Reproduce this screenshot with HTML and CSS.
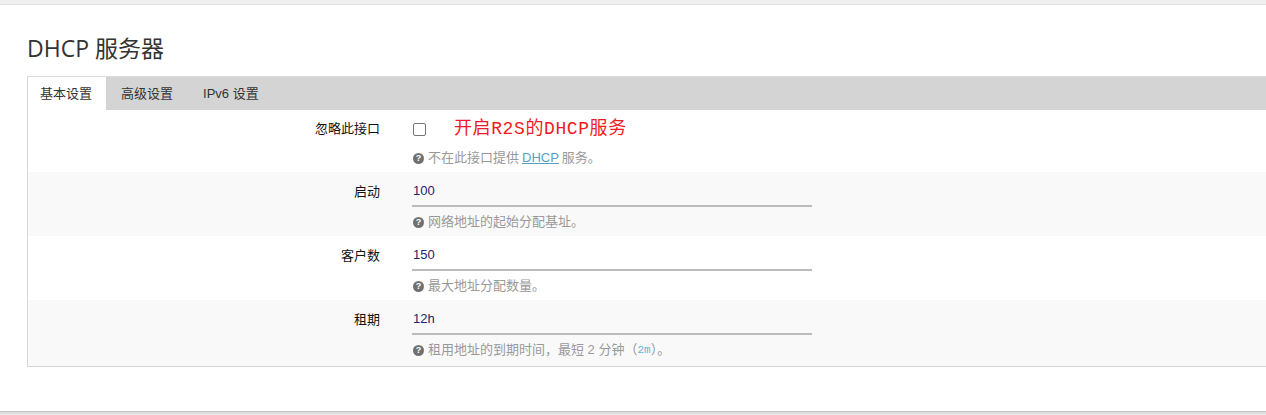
FILE: index.html
```html
<!DOCTYPE html>
<html lang="zh-CN">
<head>
<meta charset="utf-8">
<title>DHCP 服务器</title>
<link rel="stylesheet" href="styles.css">
</head>
<body>
<div class="topbar"></div>
<main class="content">
  <h2 class="title">DHCP 服务器</h2>
  <div class="panel">
    <ul class="tabs">
      <li class="tab active">基本设置</li>
      <li class="tab">高级设置</li>
      <li class="tab">IPv6 设置</li>
    </ul>
    <div class="row first">
      <label class="label">忽略此接口</label>
      <div class="field">
        <div class="control">
          <span class="checkbox"></span>
          <span class="note">开启R2S的DHCP服务</span>
        </div>
        <div class="help"><span class="qicon">?</span>不在此接口提供 <a class="link">DHCP</a> 服务。</div>
      </div>
    </div>
    <div class="row alt">
      <label class="label">启动</label>
      <div class="field">
        <div class="control"><span class="input">100</span></div>
        <div class="help"><span class="qicon">?</span>网络地址的起始分配基址。</div>
      </div>
    </div>
    <div class="row">
      <label class="label">客户数</label>
      <div class="field">
        <div class="control"><span class="input">150</span></div>
        <div class="help"><span class="qicon">?</span>最大地址分配数量。</div>
      </div>
    </div>
    <div class="row alt last">
      <label class="label">租期</label>
      <div class="field">
        <div class="control"><span class="input">12h</span></div>
        <div class="help"><span class="qicon">?</span>租用地址的到期时间，最短 2 分钟（<code class="code">2m</code>）。</div>
      </div>
    </div>
  </div>
</main>
<div class="footer"></div>
</body>
</html>
```
FILE: styles.css
```css
html, body {
  margin: 0;
  padding: 0;
  background: #fff;
  overflow: hidden;
}
body {
  font-family: "Liberation Sans", "Noto Sans CJK SC", sans-serif;
  font-size: 13px;
  color: #333;
  width: 1266px;
  height: 415px;
  display: flex;
  flex-direction: column;
}
.topbar {
  height: 4px;
  background: #efefef;
  border-bottom: 1px solid #e2e2e2;
  flex: none;
}
.content {
  padding-left: 27px;
  flex: 1;
}
.title {
  margin: 28px 0 13px;
  font-family: "Open Sans", "Noto Sans CJK SC", sans-serif;
  font-weight: 400;
  font-size: 23px;
  height: 30px;
  line-height: 30px;
  color: #333;
}
.panel {
  border-top: 1px solid #dcdcdc;
  border-left: 1px solid #d6d6d6;
  border-bottom: 1px solid #d6d6d6;
}
.tabs {
  margin: 0;
  padding: 0;
  list-style: none;
  display: flex;
  background: #d4d4d4;
  height: 33px;
}
.tab {
  padding: 0 15px;
  line-height: 33px;
  font-size: 13px;
  color: #333;
}
.tab:first-child {
  padding-left: 12px;
  padding-right: 14px;
}
.tab.active {
  background: #fff;
}
.row {
  display: grid;
  grid-template-columns: 352px 1fr;
  column-gap: 32px;
  padding: 5px 0 6px;
  background: #fff;
}
.row.alt {
  background: #f9f9f9;
}
.row.last {
  padding-bottom: 8px;
}
.label {
  text-align: right;
  font-size: 13px;
  line-height: 30px;
  color: #111;
}
.row.first .label,
.row.first .control {
  height: 28px;
  line-height: 28px;
}
.control {
  height: 30px;
  display: flex;
  align-items: center;
}
.checkbox {
  width: 11px;
  height: 11px;
  border: 1px solid #767676;
  border-radius: 2px;
  background: #fff;
  margin-left: 1px;
}
.note {
  margin-left: 28px;
  font-family: "Liberation Mono", "Noto Sans CJK SC", monospace;
  font-size: 18px;
  letter-spacing: 0.6px;
  color: #ee1b24;
  line-height: 28px;
}
.input {
  box-sizing: border-box;
  width: 400px;
  height: 30px;
  line-height: 28px;
  border-bottom: 2px solid #bbb;
  color: #23236a;
  font-size: 13px;
  padding-left: 1px;
}
.help {
  margin-top: 7px;
  height: 16px;
  line-height: 16px;
  font-size: 13px;
  color: #999;
  display: flex;
  align-items: center;
  white-space: nowrap;
}
.qicon {
  width: 11px;
  height: 11px;
  border-radius: 50%;
  background: #707070;
  color: #fff;
  font-size: 9px;
  font-weight: 700;
  line-height: 11px;
  text-align: center;
  margin: 0 4px 0 1px;
  font-family: "Liberation Sans", sans-serif;
}
.link {
  color: #5a9fbf;
  text-decoration: underline;
  margin: 0 3px;
}
.code {
  font-family: "Liberation Mono", monospace;
  font-size: 11px;
  color: #5bb8d8;
}
.footer {
  flex: none;
  height: 3px;
  border-top: 1px solid #c6c6c6;
  background: linear-gradient(#d8d8d8, #ececec);
}
```
